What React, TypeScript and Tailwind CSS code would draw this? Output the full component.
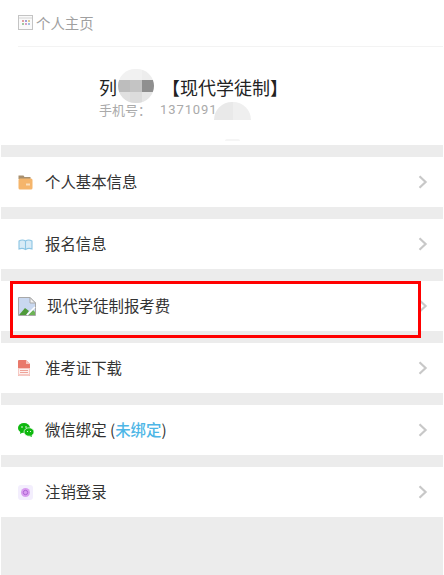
const cjk = "font-['Noto_Sans_CJK_SC','Noto_Sans',sans-serif]";

function Chevron() {
  return (
    <svg width="10" height="14" viewBox="0 0 10 14" fill="none" className="ml-auto">
      <path d="M1.5 1.2 L7.6 7 L1.5 12.8" stroke="#c8c8c8" strokeWidth="2.2" />
    </svg>
  );
}

function FolderIcon() {
  return (
    <svg width="15" height="15" viewBox="0 0 15 15">
      <path d="M0.5 0.5 h5 l1 1.5 h6 v2 h-12z" fill="#a8906f" />
      <rect x="0.5" y="3.5" width="14" height="11" rx="1.5" fill="#f5b56b" />
      <rect x="8" y="8.5" width="4" height="2" fill="#fbe0bd" />
    </svg>
  );
}

function BookIcon() {
  return (
    <svg width="15" height="13" viewBox="0 0 15 13" fill="none">
      <path d="M1 3 Q4.5 1 7.5 3 Q10.5 1 14 3 V11 Q10.5 9.5 7.5 11.5 Q4.5 9.5 1 11z" fill="#d8ebf6" stroke="#8cc5e4" strokeWidth="1.1" />
      <path d="M7.5 3 V11.5" stroke="#8cc5e4" strokeWidth="1.1" />
    </svg>
  );
}

function BrokenImage() {
  return (
    <svg width="18" height="19" viewBox="0 0 18 19">
      <path d="M0.5 0.5 H12 L17.5 6 V18.5 H0.5z" fill="#c9d8f0" stroke="#a8a8a8" />
      <path d="M12 0.5 V6 H17.5z" fill="#f2f2f2" stroke="#a8a8a8" />
      <path d="M1 18 L7 11 L11 14 L8 18z" fill="#4f9a3a" />
      <path d="M10 18 L15 13 L17 15 V18z" fill="#6db356" />
      <path d="M9 18 L17 10" stroke="#ffffff" strokeWidth="1.6" />
    </svg>
  );
}

function PdfIcon() {
  return (
    <svg width="12" height="16" viewBox="0 0 12 16">
      <path d="M0 1 Q0 0 1 0 H8 L12 4 V15 Q12 16 11 16 H1 Q0 16 0 15z" fill="#e9796b" />
      <path d="M8 0 L12 4 H8z" fill="#f7c4bd" />
      <path d="M0 8 H12 V15 Q12 16 11 16 H1 Q0 16 0 15z" fill="#f6c9c3" />
      <rect x="1" y="9" width="10" height="5" fill="#fdf0ee" />
      <path d="M2 10.5 h8 M2 12.5 h8" stroke="#ec9a8f" strokeWidth="0.9" />
    </svg>
  );
}

function WechatIcon() {
  return (
    <svg width="16" height="14" viewBox="0 0 16 14">
      <ellipse cx="6" cy="5" rx="6" ry="5" fill="#0fb80f" />
      <path d="M2.5 8 L2 11 L5.5 9z" fill="#0fb80f" />
      <ellipse cx="11" cy="9" rx="5" ry="4.2" fill="#0fb80f" stroke="#ffffff" strokeWidth="0.7" />
      <path d="M13.5 12 L14 14 L11.5 13z" fill="#0fb80f" />
      <circle cx="4" cy="4" r="0.8" fill="#ffffff" />
      <circle cx="8" cy="4" r="0.8" fill="#ffffff" />
      <circle cx="9.5" cy="8.5" r="0.6" fill="#ffffff" />
      <circle cx="12.5" cy="8.5" r="0.6" fill="#ffffff" />
    </svg>
  );
}

function LogoutIcon() {
  return (
    <svg width="15" height="15" viewBox="0 0 15 15" fill="none">
      <rect width="15" height="15" rx="3" fill="#f3eefd" />
      <circle cx="7.5" cy="7.5" r="4.5" fill="#d99df0" />
      <circle cx="7.5" cy="7.5" r="2.2" stroke="#a95fd0" strokeWidth="0.9" />
    </svg>
  );
}

function Row({ icon, children }: { icon: React.ReactNode; children: React.ReactNode }) {
  return (
    <div className="flex h-[50px] items-center bg-white pl-[17px] pr-[15px]">
      <div className="flex w-[27px] items-center">{icon}</div>
      <div className="pb-[2px] text-[15.4px] leading-[20px] text-[#333]">{children}</div>
      <Chevron />
    </div>
  );
}

function Gap() {
  return <div className="h-[12px] bg-[#ececec]" />;
}

export default function App() {
  return (
    <div className={`${cjk} relative h-[575px] w-[444px] overflow-hidden bg-white px-[1px]`}>
      {/* header */}
      <div className="ml-[17px] flex h-[47px] items-center gap-[3px] border-b border-[#f3f3f3] pb-[1px]">
        <svg width="15" height="15" viewBox="0 0 15 15">
          <rect x="0.5" y="0.5" width="14" height="14" fill="#fafafa" stroke="#c4c4c4" />
          <path d="M1 3 H14" stroke="#d4d4d4" />
          <rect x="4" y="5" width="2" height="2" fill="#e0a0a0" />
          <rect x="7" y="5" width="2" height="2" fill="#a0a0d8" />
          <rect x="10" y="5" width="2" height="2" fill="#e0c890" />
          <rect x="4" y="8" width="2" height="2" fill="#a0c8a0" />
          <rect x="7" y="8" width="2" height="2" fill="#d8a0c8" />
          <rect x="10" y="8" width="2" height="2" fill="#a0c0e0" />
        </svg>
        <span className="text-[14.4px] text-[#a0a0a0]">个人主页</span>
      </div>

      {/* profile */}
      <div className="flex h-[98px] flex-col pl-[98px] pt-[28px]">
        <div className="flex h-[24px] items-center text-[18px] text-[#222]">
          <span>列</span>
          <span className="w-[45px]" />
          <span>【现代学徒制】</span>
        </div>
        <div className="mt-[2px] flex items-center text-[13px] leading-[18px] text-[#aaa]">
          <span>手机号：</span>
          <span className="ml-[9px] font-['Roboto',sans-serif] tracking-[0.9px]">1371091</span>
        </div>
      </div>

      <Gap />
      <Row icon={<FolderIcon />}>个人基本信息</Row>
      <Gap />
      <Row icon={<BookIcon />}>报名信息</Row>
      <Gap />
      <Row icon={<BrokenImage />}><span className="ml-[2px]">现代学徒制报考费</span></Row>
      <Gap />
      <Row icon={<PdfIcon />}>准考证下载</Row>
      <Gap />
      <Row icon={<WechatIcon />}>
        微信绑定 (<span className="font-medium text-[#4db6e6]">未绑定</span>)
      </Row>
      <Gap />
      <Row icon={<LogoutIcon />}>注销登录</Row>
      <div className="h-[58px] bg-[#ececec]" />

      {/* mosaic over the name */}
      <div className="absolute left-[118px] top-[69px] grid h-[34px] w-[36px] grid-cols-3 grid-rows-3 overflow-hidden rounded-[17px] blur-[0.7px]">
        <span className="bg-[#f1f1f1]" />
        <span className="bg-[#f1f1f1]" />
        <span className="bg-[#ededed]" />
        <span className="bg-[#bdbdbd]" />
        <span className="bg-[#c4c4c4]" />
        <span className="bg-[#8f8f8f]" />
        <span className="bg-[#e0e0e0]" />
        <span className="bg-[#dcdcdc]" />
        <span className="bg-[#e6e6e6]" />
      </div>

      {/* mosaic over the phone number */}
      <div className="absolute left-[214px] top-[102px] flex h-[18px] w-[37px] overflow-hidden rounded-t-[18px] blur-[0.7px]">
        <span className="w-[19px] bg-[#e9e9e9]" />
        <span className="w-[18px] bg-[#efefef]" />
      </div>
      <div className="absolute left-[225px] top-[139px] h-[2px] w-[15px] rounded-t-full bg-[#f5f5f5]" />

      {/* red highlight */}
      <div className="absolute left-[10px] top-[281px] h-[57px] w-[411px] border-[3px] border-[#ff0000]" />
    </div>
  );
}
